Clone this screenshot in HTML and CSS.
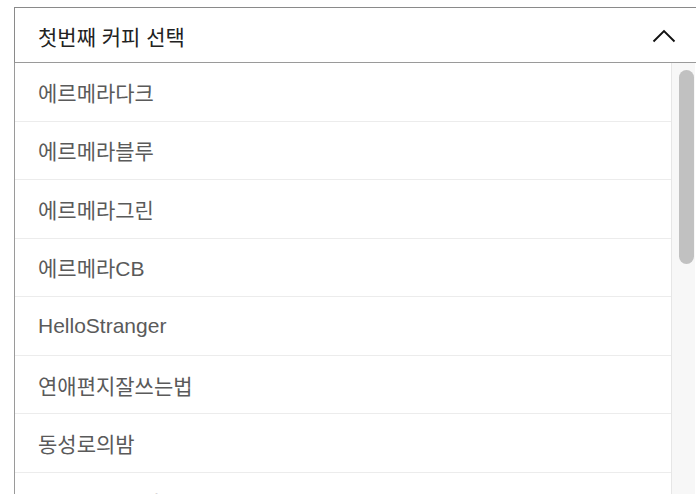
FILE: index.html
```html
<!DOCTYPE html>
<html lang="ko">
<head>
<meta charset="utf-8">
<title>커피 선택</title>
<link rel="stylesheet" href="styles.css">
</head>
<body>
<div class="select">
  <div class="select-head">
    <span class="select-label">첫번째 커피 선택</span>
    <svg class="chevron" width="24" height="14" viewBox="0 0 24 14" aria-hidden="true">
      <path d="M1.5 12.5 L12 2 L22.5 12.5" fill="none" stroke="#111" stroke-width="1.9"/>
    </svg>
  </div>
  <div class="select-list">
    <ul class="options">
      <li class="option">에르메라다크</li>
      <li class="option">에르메라블루</li>
      <li class="option">에르메라그린</li>
      <li class="option">에르메라CB</li>
      <li class="option">HelloStranger</li>
      <li class="option">연애편지잘쓰는법</li>
      <li class="option">동성로의밤</li>
      <li class="option">Sunmellow일</li>
    </ul>
    <div class="scrollbar">
      <div class="thumb"></div>
    </div>
  </div>
</div>
</body>
</html>
```

FILE: styles.css
```css
html, body {
  margin: 0;
  padding: 0;
  background: #ffffff;
  overflow: hidden;
}

body {
  font-family: "Liberation Sans", "Noto Sans CJK KR", sans-serif;
  height: 494px;
}

.select {
  margin: 7px 0 0 14px;
  width: 700px;
}

.select-head {
  box-sizing: border-box;
  height: 56px;
  border-top: 1px solid #8a8a8a;
  border-left: 1px solid #8a8a8a;
  border-bottom: 1px solid #9a9a9a;
  display: flex;
  align-items: center;
  justify-content: space-between;
  padding: 1px 0 0 23px;
}

.select-label {
  font-size: 21px;
  color: #222222;
}

.chevron {
  margin-right: 38px;
  margin-top: 0;
  display: block;
}

.select-list {
  display: flex;
  border-left: 1px solid #9a9a9a;
  height: 440px;
  overflow: hidden;
}

.options {
  list-style: none;
  margin: 0;
  padding: 0;
  width: 656px;
  flex: none;
}

.option {
  box-sizing: border-box;
  height: 58.57px;
  border-bottom: 1px solid #ececec;
  display: flex;
  align-items: center;
  padding-left: 23px;
  font-size: 21px;
  color: #5a5a5a;
}

.scrollbar {
  flex: none;
  width: 24px;
  border-left: 1px solid #e6e6e6;
  background: #f7f7f7;
  padding: 7px 0 0 7px;
  box-sizing: border-box;
}

.thumb {
  width: 15px;
  height: 194px;
  border-radius: 8px;
  background: #c1c1c1;
}
```
